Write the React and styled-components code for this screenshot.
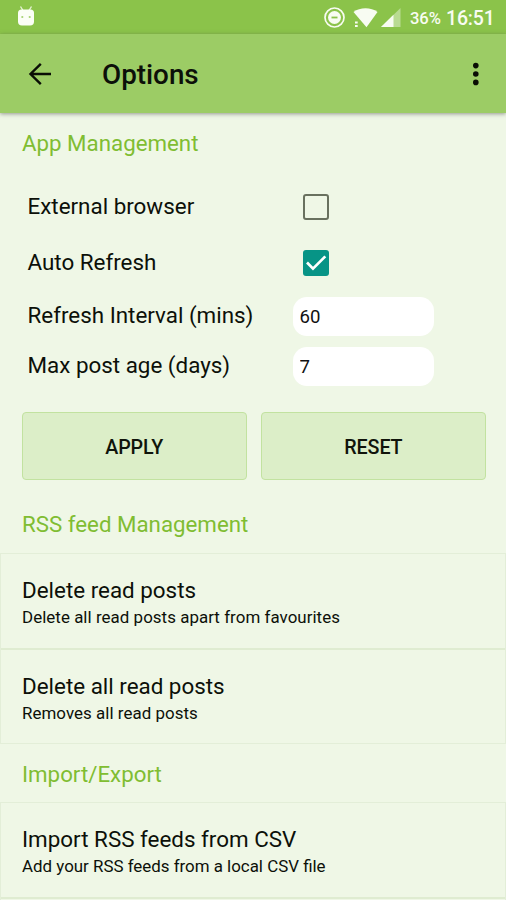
import React from "react";
import styled, { createGlobalStyle, css } from "styled-components";

const GlobalStyle = createGlobalStyle`
  *, *::before, *::after { box-sizing: border-box; }
  body {
    margin: 0;
    background: #eff7e6;
    color: #0c1009;
    font-family: Roboto, sans-serif;
    overflow: hidden;
  }
`;

const Screen = styled.main`
  display: flex;
  flex-direction: column;
  width: 506px;
  height: 900px;
  overflow: hidden;
  background: #eff7e6;
`;

const StatusBar = styled.div`
  flex: none;
  display: flex;
  align-items: center;
  height: 34px;
  padding: 0 11px 0 16px;
  background: #8bc34a;
  color: #f8fcf2;
`;

const StatusIcons = styled.div`
  display: flex;
  align-items: center;
  margin-left: auto;
`;

const WifiSlot = styled.span`
  display: flex;
  margin: 0 3px 0 8px;
`;

const Battery = styled.span`
  margin-left: 9px;
  padding-top: 3px;
  width: 31px;
  font-size: 16.6px;
  font-weight: 500;
  line-height: 20px;
  letter-spacing: -0.1px;
  white-space: nowrap;
`;

const Clock = styled.span`
  margin-left: 5px;
  padding-top: 3px;
  width: 49px;
  font-size: 19.5px;
  font-weight: 500;
  line-height: 22px;
  letter-spacing: -0.15px;
  white-space: nowrap;
`;

const Toolbar = styled.header`
  flex: none;
  display: flex;
  align-items: center;
  height: 79px;
  padding: 0 13px 0 23px;
  background: #9ccc65;
  box-shadow: 0 1px 4px rgba(60, 60, 60, 0.5);
  z-index: 1;
`;

const IconButton = styled.button`
  display: flex;
  align-items: center;
  justify-content: center;
  padding: 0;
  border: 0;
  background: none;
  color: #0a0e05;
`;

const Title = styled.h1`
  flex: 1;
  margin: 0 0 0 45px;
  padding-top: 2px;
  font-size: 27.8px;
  font-weight: 500;
  line-height: 34px;
`;

const SectionHeading = styled.h2`
  flex: none;
  display: flex;
  align-items: center;
  height: ${(p) => p.$height || 60}px;
  margin: 0;
  padding: ${(p) => p.$offset || 0}px 22px 0;
  color: #80bd32;
  font-size: 22.3px;
  font-weight: 400;
  line-height: 28px;
`;

const Form = styled.section`
  flex: none;
  display: flex;
  flex-direction: column;
  height: 320px;
`;

const Setting = styled.label`
  flex: none;
  display: grid;
  grid-template-columns: 265px 1fr;
  align-items: center;
  height: ${(p) => p.$height}px;
  padding-left: 27.5px;
`;

const SettingLabel = styled.span`
  margin-top: -2px;
  font-size: 22.4px;
  line-height: 28px;
  white-space: nowrap;
`;

const CheckBox = styled.span`
  display: flex;
  width: 26px;
  height: 26px;
  margin-left: 10px;
  border-radius: 3px;
  ${(p) =>
    p.$checked
      ? css`
          background: #079486;
        `
      : css`
          border: 2.4px solid #69715f;
        `}
`;

const NumberField = styled.input`
  width: 141px;
  height: 39px;
  padding: 2px 7px 0;
  border: 0;
  border-radius: 14px;
  background: #fff;
  color: #111;
  font: 400 18.6px Roboto, sans-serif;
  outline: none;
`;

const Buttons = styled.div`
  display: grid;
  grid-template-columns: 1fr 1fr;
  gap: 14px;
  margin-top: 26px;
  padding: 0 20px 0 21.5px;
`;

const Button = styled.button`
  height: 68px;
  padding: 2px 0 0;
  border: 1.5px solid #c2e2a0;
  border-radius: 4px;
  background: #dceec8;
  color: #10140b;
  font: 500 19.7px Roboto, sans-serif;
  letter-spacing: -0.1px;
`;

const List = styled.ul`
  flex: none;
  margin: 0;
  padding: 0;
  list-style: none;
  border: 1px solid #e3eed8;
`;

const Item = styled.li`
  display: flex;
  flex-direction: column;
  height: 94px;
  padding: 22px 21px 0;

  & + & {
    height: 95px;
    border-top: 2px solid #dfecd1;
  }
`;

const ItemTitle = styled.span`
  font-size: 22.4px;
  line-height: 28px;
`;

const ItemNote = styled.span`
  margin-top: 2px;
  font-size: 16.9px;
  line-height: 22px;
  letter-spacing: ${(p) => (p.$tight ? 0 : 0.05)}px;
`;

const AndroidIcon = () => (
  <svg width="20" height="22" viewBox="0 0 20 22">
    <path d="M4.500 0.500 7 4.500M15.500 0.500 13 4.500" stroke="#e5f3d3" strokeWidth="1.400" />
    <path d="M2 7Q2 3.500 5.500 3.500H14.500Q18 3.500 18 7V15.500Q18 19.500 14 19.500H6Q2 19.500 2 15.500Z" fill="#fbfef6" />
    <circle cx="6.300" cy="11" r="1.100" fill="#a8d274" />
    <circle cx="13.700" cy="11" r="1.100" fill="#a8d274" />
  </svg>
);

const PriorityIcon = () => (
  <svg width="22" height="22" viewBox="0 0 22 22">
    <circle cx="11.500" cy="11.500" r="9.500" fill="none" stroke="currentColor" strokeWidth="1.700" />
    <circle cx="11.500" cy="11.500" r="6.500" fill="currentColor" />
    <path d="M8.500 11.500h6" stroke="#8bc34a" strokeWidth="1.800" />
  </svg>
);

const WifiIcon = () => (
  <svg width="25" height="22" viewBox="0 0 25 22">
    <path d="M0.500 6C7 1 18 1 24.500 6L13.500 21.300Z" fill="currentColor" />
    <path d="M1 14.500h4.500v6H1z" fill="#8bc34a" />
    <path d="M2 16.500h2.700M2 20h2.700" stroke="currentColor" strokeWidth="2" />
  </svg>
);

const SignalIcon = () => (
  <svg width="20" height="20" viewBox="0 0 20 20">
    <path d="M19.500 1V20H0Z" fill="#b9db92" />
    <path d="M12.500 7.800V20H0Z" fill="currentColor" />
  </svg>
);

const BackIcon = () => (
  <svg width="34" height="34" viewBox="0 0 34 34" fill="none" stroke="currentColor" strokeWidth="2.400">
    <path d="M28 17H7M17.800 6.800 7.500 17 17.800 27.200" />
  </svg>
);

const MoreIcon = () => (
  <svg width="34" height="34" viewBox="0 0 34 34" fill="currentColor">
    <circle cx="16.800" cy="8.600" r="2.800" />
    <circle cx="16.800" cy="17" r="2.800" />
    <circle cx="16.800" cy="25.400" r="2.800" />
  </svg>
);

const CheckMark = () => (
  <svg width="26" height="26" viewBox="0 0 26 26">
    <path d="M4 12.500 10 18.700 22.300 6.400" fill="none" stroke="#fff" strokeWidth="2.700" />
  </svg>
);

export default function App() {
  return (
    <>
      <GlobalStyle />
      <Screen>
        <StatusBar>
          <AndroidIcon />
          <StatusIcons>
            <PriorityIcon />
            <WifiSlot><WifiIcon /></WifiSlot>
            <SignalIcon />
            <Battery>36%</Battery>
            <Clock>16:51</Clock>
          </StatusIcons>
        </StatusBar>
        <Toolbar>
          <IconButton aria-label="Back"><BackIcon /></IconButton>
          <Title>Options</Title>
          <IconButton aria-label="More options"><MoreIcon /></IconButton>
        </Toolbar>

        <SectionHeading>App Management</SectionHeading>
        <Form>
          <Setting $height={67}>
            <SettingLabel>External browser</SettingLabel>
            <CheckBox />
          </Setting>
          <Setting $height={46}>
            <SettingLabel>Auto Refresh</SettingLabel>
            <CheckBox $checked><CheckMark /></CheckBox>
          </Setting>
          <Setting $height={60}>
            <SettingLabel>Refresh Interval (mins)</SettingLabel>
            <NumberField defaultValue="60" />
          </Setting>
          <Setting $height={40}>
            <SettingLabel>Max post age (days)</SettingLabel>
            <NumberField defaultValue="7" />
          </Setting>
          <Buttons>
            <Button>APPLY</Button>
            <Button>RESET</Button>
          </Buttons>
        </Form>

        <SectionHeading $offset={2}>RSS feed Management</SectionHeading>
        <List>
          <Item>
            <ItemTitle>Delete read posts</ItemTitle>
            <ItemNote>Delete all read posts apart from favourites</ItemNote>
          </Item>
          <Item>
            <ItemTitle>Delete all read posts</ItemTitle>
            <ItemNote>Removes all read posts</ItemNote>
          </Item>
        </List>

        <SectionHeading $height={58} $offset={2}>Import/Export</SectionHeading>
        <List>
          <Item>
            <ItemTitle>Import RSS feeds from CSV</ItemTitle>
            <ItemNote $tight>Add your RSS feeds from a local CSV file</ItemNote>
          </Item>
          <Item />
        </List>
      </Screen>
    </>
  );
}
